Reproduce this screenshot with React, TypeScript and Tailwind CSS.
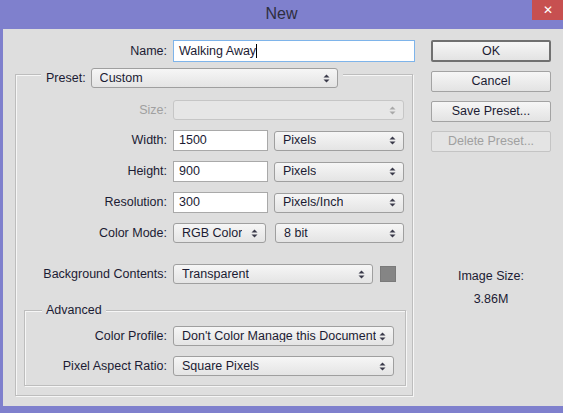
import { clsx } from 'clsx'

const font = { fontFamily: '"Liberation Sans", Arial, sans-serif' }

function Arrows({ disabled }: { disabled?: boolean }) {
  return (
    <svg width="7" height="9" viewBox="0 0 7 9" className={disabled ? 'text-[#a8a8a8]' : 'text-[#3a3a4a]'}>
      <path d="M3.5 0.5 L6.5 3.5 L0.5 3.5 Z" fill="currentColor" />
      <path d="M0.5 5.5 L6.5 5.5 L3.5 8.5 Z" fill="currentColor" />
    </svg>
  )
}

function Select({ value, className, disabled }: { value?: string; className: string; disabled?: boolean }) {
  return (
    <div
      className={clsx(
        'flex h-[20px] shrink-0 items-center justify-between rounded-[3px] border pl-[8px] pr-[7px]',
        disabled
          ? 'border-[#c6c6c6] bg-[#e6e6e6]'
          : 'border-[#9f9f9f] bg-gradient-to-b from-[#f6f6f6] to-[#e4e4e4]',
        className
      )}
    >
      <span className="truncate text-[12.5px] leading-none text-[#1b1b33]">{value}</span>
      <Arrows disabled={disabled} />
    </div>
  )
}

function Field({ value, className }: { value: string; className: string }) {
  return (
    <div className={clsx('flex h-[21px] shrink-0 items-center border border-[#a9a9a9] bg-white pl-[5px]', className)}>
      <span className="text-[12.5px] leading-none text-[#1b1b33]">{value}</span>
    </div>
  )
}

function Row({ label, children, labelW, className, dim }: { label: string; children: React.ReactNode; labelW: string; className?: string; dim?: boolean }) {
  return (
    <div className={clsx('flex items-center gap-[6px]', className)}>
      <div className={clsx('text-right text-[12.5px]', labelW, dim ? 'text-[#a0a0a0]' : 'text-[#1b1b33]')}>{label}</div>
      {children}
    </div>
  )
}

function Btn({ label, primary, disabled }: { label: string; primary?: boolean; disabled?: boolean }) {
  return (
    <div
      className={clsx(
        'flex w-[120px] items-center justify-center rounded-[2px] text-[12.5px]',
        primary ? 'h-[22px] border-2 border-[#707070]' : 'h-[21px] border',
        disabled
          ? 'border-[#c4c4c4] bg-[#e4e4e4] text-[#a0a0a0]'
          : 'bg-gradient-to-b from-[#f6f6f6] to-[#e3e3e3] text-[#1b1b33]',
        !primary && !disabled && 'border-[#a3a3a3]'
      )}
    >
      {label}
    </div>
  )
}

export default function App() {
  return (
    <div className="flex h-[413px] w-[563px] flex-col overflow-hidden bg-[#7f80cd]" style={font}>
      {/* title bar */}
      <div className="flex h-[29px] shrink-0 items-start">
        <div className="w-[31px]" />
        <div className="flex-1 pt-[6px] text-center text-[16px] leading-none text-[#2e2e40]">New</div>
        <div className="flex h-[20px] w-[31px] items-center justify-center bg-[#c75050] text-[12px] leading-none text-white">
          ✕
        </div>
      </div>

      {/* body */}
      <div className="ml-[3px] mb-[7px] flex flex-1 bg-[#dedede] pt-[11px]">
        <div className="pl-[12px]">
          <Row label="Name:" labelW="w-[152px]">
            <div className="flex h-[22px] w-[242px] items-center border border-[#7eb4ea] bg-white pl-[5px]">
              <span className="text-[12.5px] leading-none text-[#1b1b33]">Walking Away</span>
              <span className="h-[14px] w-px bg-black" />
            </div>
          </Row>

          <div className="mt-[12px] h-[322px] w-[398px] border border-[#bdbdbd] shadow-[inset_1px_1px_0_#f6f6f6,1px_1px_0_#f6f6f6]">
            <div className="-mt-[7px] ml-[25px] flex w-fit items-center gap-[5px] bg-[#dedede] px-[5px]">
              <span className="text-[12.5px] text-[#1b1b33]">Preset:</span>
              <Select value="Custom" className="w-[247px]" />
            </div>

            <Row label="Size:" labelW="w-[151px]" className="mt-[12px]" dim>
              <Select className="w-[231px]" disabled />
            </Row>
            <Row label="Width:" labelW="w-[151px]" className="mt-[10px]">
              <Field value="1500" className="w-[95px]" />
              <Select value="Pixels" className="w-[130px]" />
            </Row>
            <Row label="Height:" labelW="w-[151px]" className="mt-[10px]">
              <Field value="900" className="w-[95px]" />
              <Select value="Pixels" className="w-[130px]" />
            </Row>
            <Row label="Resolution:" labelW="w-[151px]" className="mt-[10px]">
              <Field value="300" className="w-[95px]" />
              <Select value="Pixels/Inch" className="w-[130px]" />
            </Row>
            <Row label="Color Mode:" labelW="w-[151px]" className="mt-[10px]">
              <Select value="RGB Color" className="w-[93px]" />
              <Select value="8 bit" className="ml-[3px] w-[129px]" />
            </Row>
            <Row label="Background Contents:" labelW="w-[151px]" className="mt-[21px]">
              <Select value="Transparent" className="w-[200px]" />
              <div className="ml-[1px] h-[16px] w-[16px] border border-[#7a7a7a] bg-[#858585]" />
            </Row>

            <div className="ml-[8px] mr-[6px] mt-[26px] h-[76px] border border-[#bdbdbd] shadow-[inset_1px_1px_0_#f6f6f6,1px_1px_0_#f6f6f6]">
              <div className="-mt-[8px] ml-[17px] w-fit bg-[#dedede] px-[4px] text-[12.5px] leading-[15px] text-[#1b1b33]">
                Advanced
              </div>
              <Row label="Color Profile:" labelW="w-[142px]" className="mt-[8px]">
                <Select value="Don't Color Manage this Document" className="w-[221px]" />
              </Row>
              <Row label="Pixel Aspect Ratio:" labelW="w-[142px]" className="mt-[10px]">
                <Select value="Square Pixels" className="w-[221px]" />
              </Row>
            </div>
          </div>
        </div>

        <div className="ml-[16px] flex flex-col">
          <div className="flex flex-col gap-[9px]">
            <Btn label="OK" primary />
            <Btn label="Cancel" />
            <Btn label="Save Preset..." />
            <Btn label="Delete Preset..." disabled />
          </div>
          <div className="mt-[113px] w-[120px] text-center text-[12.5px] leading-[23px] text-[#1b1b33]">
            <div>Image Size:</div>
            <div>3.86M</div>
          </div>
        </div>
      </div>
    </div>
  )
}
